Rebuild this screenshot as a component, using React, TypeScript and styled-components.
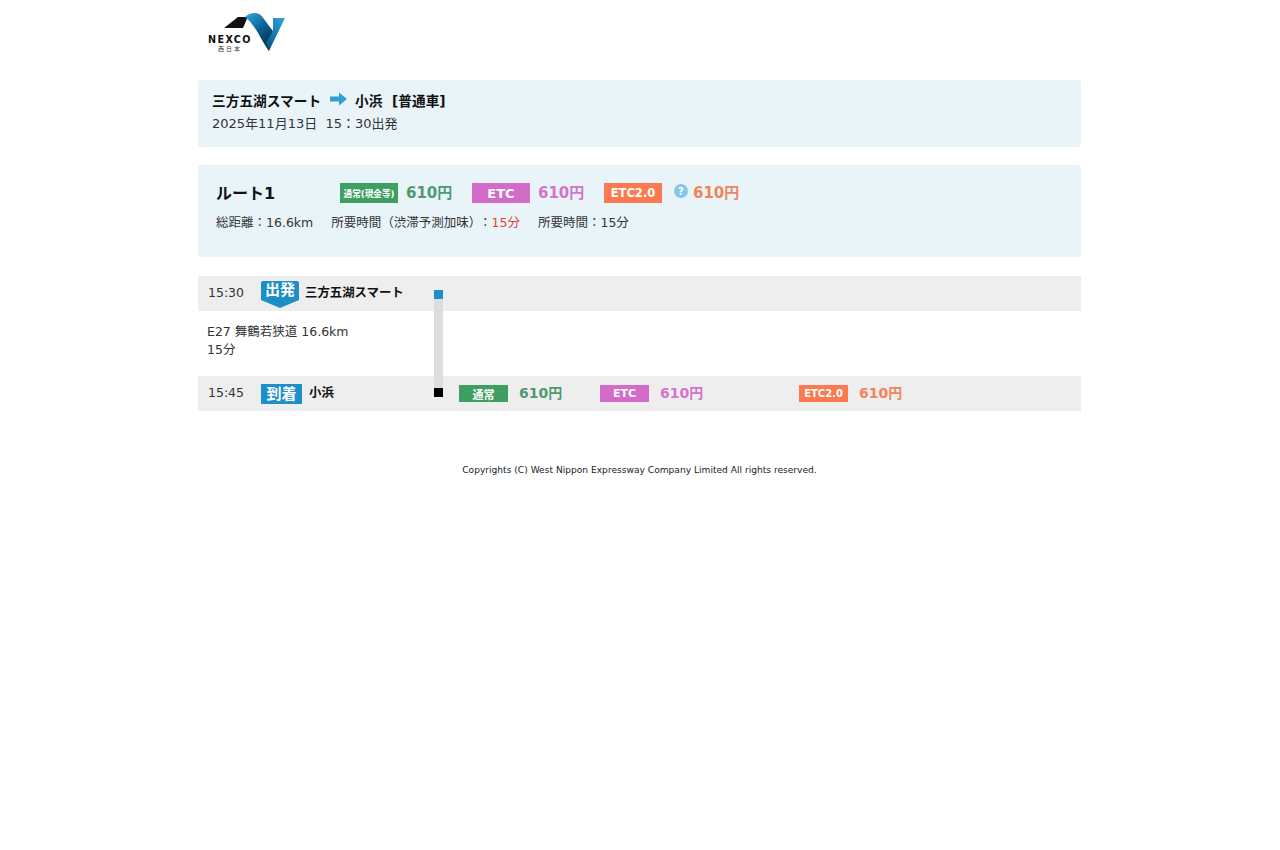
import React from "react"
import styled, { createGlobalStyle } from "styled-components"

const GlobalStyle = createGlobalStyle`
  html, body {
    margin: 0;
    padding: 0;
    background: #fff;
  }
  body {
    font-family: "DejaVu Sans", "Noto Sans CJK JP", sans-serif;
    color: #222;
  }
`

const Page = styled.div`
  width: 883px;
  margin-left: 198px;
  padding-top: 12px;
`

const LogoWrap = styled.div`
  height: 68px;
  padding-left: 9px;
`

const SummaryBox = styled.section`
  background: #e9f4f9;
  border-radius: 3px;
  height: 67px;
  box-sizing: border-box;
  padding: 10px 14px 0;
  margin-bottom: 18px;
`

const RouteLine = styled.div`
  display: flex;
  align-items: center;
  height: 19px;
  font-size: 13.7px;
  font-weight: 700;
  color: #111;
`

const DateLine = styled.div`
  margin-top: 6px;
  font-size: 13px;
  line-height: 18px;
  color: #333;
`

const RouteBox = styled.section`
  background: #e9f4f9;
  border-radius: 3px;
  height: 92px;
  box-sizing: border-box;
  padding: 17px 18px 0;
  margin-bottom: 19px;
`

const RouteHead = styled.div`
  display: flex;
  align-items: center;
  height: 22px;
`

const RouteName = styled.h2`
  margin: 0;
  width: 124px;
  padding-bottom: 2px;
  font-size: 16px;
  font-weight: 700;
  color: #111;
`

const Tag = styled.span<{ $color: string; $w: number; $h: number; $size?: number }>`
  display: inline-flex;
  align-items: center;
  justify-content: center;
  flex: none;
  width: ${p => p.$w}px;
  height: ${p => p.$h}px;
  background: ${p => p.$color};
  color: #fff;
  font-size: ${p => p.$size ?? 12}px;
  font-weight: 700;
  white-space: nowrap;
`

const Price = styled.span<{ $color: string; $size?: number; $w?: number; $gap?: number }>`
  flex: none;
  padding-bottom: 3px;
  color: ${p => p.$color};
  font-size: ${p => p.$size ?? 15}px;
  font-weight: 700;
  white-space: nowrap;
  margin-left: ${p => p.$gap ?? 8}px;
  width: ${p => (p.$w ? `${p.$w}px` : "auto")};
`

const HelpIcon = styled.span`
  display: inline-flex;
  align-items: center;
  justify-content: center;
  flex: none;
  width: 14px;
  height: 14px;
  margin-left: 12px;
  margin-bottom: 4px;
  border-radius: 50%;
  background: #86c6e8;
  color: #fff;
  font-size: 10px;
  font-weight: 700;
`

const MetaLine = styled.div`
  display: flex;
  margin-top: 10px;
  font-size: 12.5px;
  line-height: 18px;
  color: #333;
`

const MetaItem = styled.span`
  margin-right: 18px;
`

const Colon = styled.span`
  margin-left: 4px;
`

const Red = styled.span`
  color: #e8413a;
`

const Timeline = styled.div`
  position: relative;
`

const StopRow = styled.div`
  display: flex;
  align-items: center;
  height: 35px;
  background: #eee;
  padding-left: 10px;
  font-size: 12.5px;
`

const Time = styled.span`
  width: 53px;
  flex: none;
  padding-bottom: 2px;
  color: #333;
`

const DepartBadge = styled.span`
  position: relative;
  flex: none;
  display: inline-flex;
  justify-content: center;
  width: 38px;
  height: 19px;
  margin-top: -7px;
  background: #1d8fc8;
  border-radius: 2px 2px 0 0;
  color: #fff;
  font-size: 15px;
  font-weight: 700;
  line-height: 19px;
  &::after {
    content: "";
    position: absolute;
    top: 19px;
    left: 0;
    border-style: solid;
    border-width: 8px 19px 0;
    border-color: #1d8fc8 transparent transparent;
  }
`

const ArriveBadge = styled.span`
  flex: none;
  width: 41px;
  height: 20px;
  background: #1d8fc8;
  border-radius: 1px;
  color: #fff;
  font-size: 15px;
  font-weight: 700;
  line-height: 20px;
  text-align: center;
`

const StopName = styled.span<{ $gap: number; $w: number }>`
  flex: none;
  margin-left: ${p => p.$gap}px;
  width: ${p => p.$w}px;
  padding-bottom: 3px;
  font-size: 12.4px;
  font-weight: 700;
  color: #111;
`

const SectionRow = styled.div`
  height: 65px;
  box-sizing: border-box;
  padding: 12px 0 0 9px;
  font-size: 12.5px;
  line-height: 18px;
  color: #333;
`

const Rail = styled.div`
  position: absolute;
  left: 236px;
  top: 14px;
  width: 9px;
  height: 107px;
  background: #ddd;
  &::before,
  &::after {
    content: "";
    position: absolute;
    left: 0;
    width: 9px;
    height: 9px;
  }
  &::before {
    top: 0;
    background: #1d8fc8;
  }
  &::after {
    bottom: 0;
    background: #000;
  }
`

const Footer = styled.footer`
  margin-top: 52px;
  text-align: center;
  font-size: 9.1px;
  line-height: 14px;
  color: #222;
`

const ArrowSvg = styled.svg`
  flex: none;
  margin: 0 8px 1px 9px;
`

const Logo = () => (
  <svg width="80" height="42" viewBox="0 0 80 42">
    <defs>
      <linearGradient id="sw" x1="0.15" y1="0" x2="0.8" y2="1">
        <stop offset="0" stopColor="#2fa0d6" />
        <stop offset="0.45" stopColor="#0c6296" />
        <stop offset="1" stopColor="#04263f" />
      </linearGradient>
      <linearGradient id="sw2" x1="0.9" y1="0" x2="0.2" y2="1">
        <stop offset="0" stopColor="#2fa5dc" />
        <stop offset="1" stopColor="#0a5484" />
      </linearGradient>
    </defs>
    <path d="M17 16 L31 5 H41 C39 8 38 12 36 16 Z" fill="#111" />
    <path d="M38 5 C42 1 48 0 52 2 C56 4 60 12 66 19 L62 39 C55 30 48 12 38 5 Z" fill="url(#sw)" />
    <path d="M66 6 H78 L62 39 L59 30 L66 19 Z" fill="url(#sw2)" />
    <text x="1" y="31" fontFamily="'DejaVu Sans', sans-serif" fontSize="9.6" fontWeight="700" fill="#111" letterSpacing="1.4">NEXCO</text>
    <text x="11" y="39" fontFamily="'Noto Sans CJK JP', sans-serif" fontSize="6" fill="#333" letterSpacing="2">西日本</text>
  </svg>
)

const Arrow = () => (
  <ArrowSvg width="17" height="14" viewBox="0 0 17 14">
    <path d="M0 4.5 H9 V0.5 L17 7 L9 13.5 V9.5 H0 Z" fill="#2f9fd0" />
  </ArrowSvg>
)

const App = () => {
  return (
    <>
      <GlobalStyle />
      <Page>
        <LogoWrap>
          <Logo />
        </LogoWrap>
        <SummaryBox>
          <RouteLine>
            三方五湖スマート
            <Arrow />
            小浜&nbsp;&nbsp;[普通車]
          </RouteLine>
          <DateLine>2025年11月13日&nbsp;&nbsp;15：30出発</DateLine>
        </SummaryBox>
        <RouteBox>
          <RouteHead>
            <RouteName>ルート1</RouteName>
            <Tag $color="#3f9f63" $w={58} $h={20} $size={8.6}>通常(現金等)</Tag>
            <Price $color="#4f9a6e" $w={66}>610円</Price>
            <Tag $color="#d36cc8" $w={58} $h={20} $size={13}>ETC</Tag>
            <Price $color="#d373c9" $w={66}>610円</Price>
            <Tag $color="#fb7a4f" $w={58} $h={20} $size={11.5}>ETC2.0</Tag>
            <HelpIcon>?</HelpIcon>
            <Price $color="#f0845c" $gap={5}>610円</Price>
          </RouteHead>
          <MetaLine>
            <MetaItem>総距離：16.6km</MetaItem>
            <MetaItem>所要時間（渋滞予測加味）<Colon>：</Colon><Red>15分</Red></MetaItem>
            <MetaItem>所要時間：15分</MetaItem>
          </MetaLine>
        </RouteBox>
        <Timeline>
          <StopRow>
            <Time>15:30</Time>
            <DepartBadge>出発</DepartBadge>
            <StopName $gap={6} $w={120}>三方五湖スマート</StopName>
          </StopRow>
          <SectionRow>
            E27 舞鶴若狭道 16.6km
            <br />
            15分
          </SectionRow>
          <StopRow>
            <Time>15:45</Time>
            <ArriveBadge>到着</ArriveBadge>
            <StopName $gap={7} $w={150}>小浜</StopName>
            <Tag $color="#3f9f63" $w={49} $h={17} $size={11}>通常</Tag>
            <Price $color="#4f9a6e" $size={14} $w={81} $gap={11}>610円</Price>
            <Tag $color="#d36cc8" $w={49} $h={17} $size={11}>ETC</Tag>
            <Price $color="#d373c9" $size={14} $w={139} $gap={11}>610円</Price>
            <Tag $color="#fb7a4f" $w={49} $h={17} $size={10}>ETC2.0</Tag>
            <Price $color="#f0845c" $size={14} $gap={11}>610円</Price>
          </StopRow>
          <Rail />
        </Timeline>
        <Footer>Copyrights (C) West Nippon Expressway Company Limited All rights reserved.</Footer>
      </Page>
    </>
  )
}

export default App
